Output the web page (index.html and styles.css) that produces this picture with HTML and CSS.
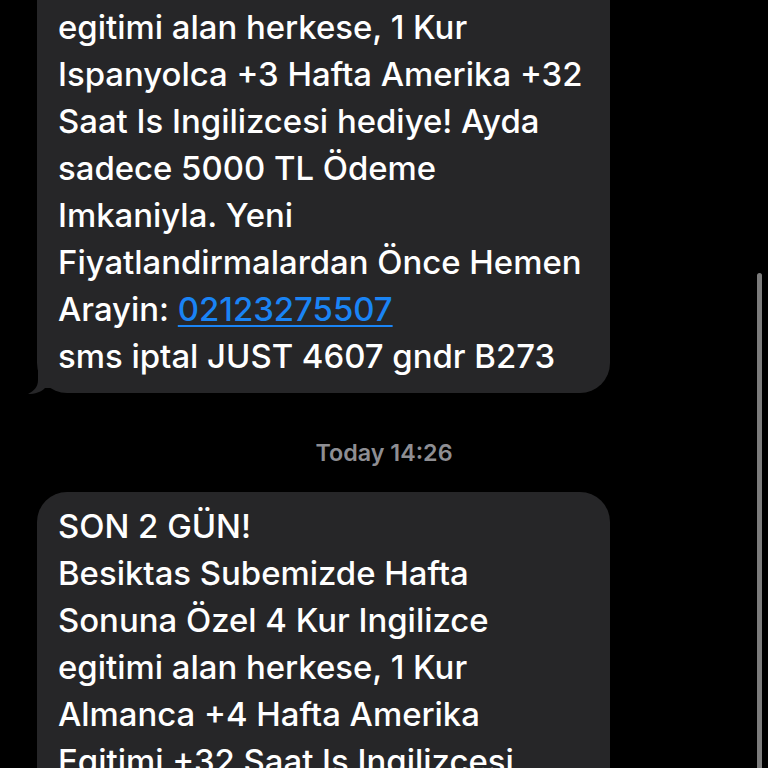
FILE: index.html
```html
<!DOCTYPE html>
<html lang="tr">
<head>
<meta charset="utf-8">
<link rel="stylesheet" href="styles.css">
</head>
<body>
<div class="thread">
  <div class="bubble first">
    Sonuna Özel 4 Kur Ingilizce<br>
    egitimi alan herkese, 1 Kur<br>
    Ispanyolca +3 Hafta Amerika +32<br>
    Saat Is Ingilizcesi hediye! Ayda<br>
    sadece 5000 TL Ödeme<br>
    Imkaniyla. Yeni<br>
    Fiyatlandirmalardan Önce Hemen<br>
    Arayin: <a class="link" href="#">02123275507</a><br>
    sms iptal JUST 4607 gndr B273
    <svg class="tail" width="24" height="24" viewBox="0 0 24 24"><path d="M10 0 L10 10 C10 17 6 21 0 24 C7 24 13 22 17 18 L24 18 L24 0 Z" fill="#262628"/></svg>
  </div>
  <div class="stamp">Today 14:26</div>
  <div class="bubble">
    SON 2 GÜN!<br>
    Besiktas Subemizde Hafta<br>
    Sonuna Özel 4 Kur Ingilizce<br>
    egitimi alan herkese, 1 Kur<br>
    Almanca +4 Hafta Amerika<br>
    Egitimi +32 Saat Is Ingilizcesi<br>
    hediye!
  </div>
</div>
<div class="scrollbar"></div>
</body>
</html>
```
FILE: styles.css
```css
html, body {
  margin: 0;
  padding: 0;
  background: #000;
  height: 768px;
  overflow: hidden;
}
body {
  font-family: Inter, "Liberation Sans", sans-serif;
  position: relative;
}
.thread {
  display: flex;
  flex-direction: column;
}
.bubble {
  position: relative;
  margin-left: 37px;
  width: 573px;
  box-sizing: border-box;
  background: #262628;
  border-radius: 30px;
  padding: 11px 21px 13px;
  color: #fff;
  font-size: 32.9px;
  font-weight: 500;
  line-height: 47px;
  white-space: nowrap;
}
.bubble.first {
  margin-top: -54px;
}
.link {
  color: #1a84f5;
  text-decoration: underline;
  text-decoration-thickness: 2px;
  text-underline-offset: 4px;
}
.tail {
  position: absolute;
  left: -9px;
  bottom: -1px;
}
.stamp {
  padding: 47px 0 26px;
  line-height: 26px;
  text-align: center;
  color: #8e8e93;
  font-size: 23.3px;
  font-weight: 600;
}
.scrollbar {
  position: absolute;
  right: 6px;
  top: 273px;
  width: 5px;
  height: 520px;
  background: #7c7c7c;
  border-radius: 3px;
}
```
